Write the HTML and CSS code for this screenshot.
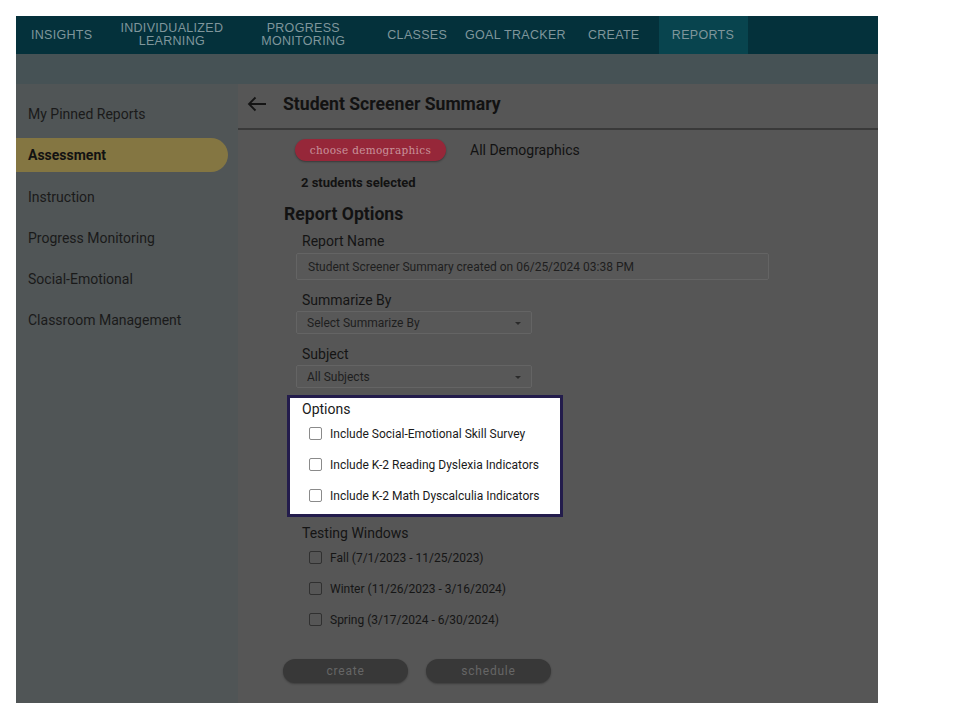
FILE: index.html
```html
<!DOCTYPE html>
<html>
<head>
<meta charset="utf-8">
<link rel="stylesheet" href="styles.css">
</head>
<body>
<div class="app">
  <nav class="topnav">
    <div class="tab t-insights">INSIGHTS</div>
    <div class="tab t-il">INDIVIDUALIZED<br>LEARNING</div>
    <div class="tab t-pm">PROGRESS<br>MONITORING</div>
    <div class="tab t-classes">CLASSES</div>
    <div class="tab t-goal">GOAL TRACKER</div>
    <div class="tab t-create">CREATE</div>
    <div class="tab active">REPORTS</div>
  </nav>
  <div class="subbar"></div>
  <div class="body">
    <aside class="sidebar">
      <div class="side-item">My Pinned Reports</div>
      <div class="side-item selected">Assessment</div>
      <div class="side-item">Instruction</div>
      <div class="side-item">Progress Monitoring</div>
      <div class="side-item">Social-Emotional</div>
      <div class="side-item">Classroom Management</div>
    </aside>
    <main class="main">
      <header class="page-head">
        <svg class="back" width="20" height="16" viewBox="0 0 20 16"><path d="M19 8H2M8.5 1.5L2 8l6.5 6.5" fill="none" stroke="#141414" stroke-width="1.8"/></svg>
        <h1 class="title">Student Screener Summary</h1>
      </header>
      <section class="content">
        <div class="demo-row">
          <span class="pill">choose demographics</span>
          <span class="demo-text">All Demographics</span>
        </div>
        <div class="selected-count">2 students selected</div>
        <h2 class="section-title">Report Options</h2>

        <div class="field-label">Report Name</div>
        <div class="input">Student Screener Summary created on 06/25/2024 03:38 PM</div>

        <div class="field-label gap">Summarize By</div>
        <div class="select"><span>Select Summarize By</span><span class="caret"></span></div>

        <div class="field-label gap">Subject</div>
        <div class="select"><span>All Subjects</span><span class="caret"></span></div>

        <div class="options-box">
          <div class="field-label inbox">Options</div>
          <div class="check-row"><span class="box light"></span>Include Social-Emotional Skill Survey</div>
          <div class="check-row"><span class="box light"></span>Include K-2 Reading Dyslexia Indicators</div>
          <div class="check-row"><span class="box light"></span>Include K-2 Math Dyscalculia Indicators</div>
        </div>

        <div class="field-label tw">Testing Windows</div>
        <div class="check-row dim"><span class="box"></span>Fall (7/1/2023 - 11/25/2023)</div>
        <div class="check-row dim"><span class="box"></span>Winter (11/26/2023 - 3/16/2024)</div>
        <div class="check-row dim"><span class="box"></span>Spring (3/17/2024 - 6/30/2024)</div>

        <div class="actions">
          <span class="btn">create</span>
          <span class="btn">schedule</span>
        </div>
      </section>
    </main>
  </div>
</div>
</body>
</html>
```
FILE: styles.css
```css
html, body {
  margin: 0;
  padding: 0;
  background: #ffffff;
}
body {
  font-family: Roboto, "Liberation Sans", sans-serif;
}
.app {
  margin: 16px 0 0 16px;
  width: 862px;
  height: 687px;
  display: flex;
  flex-direction: column;
  overflow: hidden;
  background: #565656;
}
.topnav {
  height: 38px;
  background: #04313b;
  display: flex;
  align-items: stretch;
  flex: none;
}
.tab {
  display: flex;
  align-items: center;
  justify-content: center;
  text-align: center;
  color: #7f969b;
  font-family: "Liberation Sans", Arial, sans-serif;
  font-size: 12.5px;
  line-height: 13px;
  letter-spacing: 0.3px;
}
.t-insights { padding-left: 15px; }
.t-il { margin-left: 28px; }
.t-pm { margin-left: 38px; }
.t-classes { margin-left: 42px; }
.t-goal { margin-left: 18px; }
.t-create { margin-left: 22px; }
.tab.active {
  background: #08444e;
  width: 89px;
  margin-left: 19px;
}
.subbar {
  height: 30px;
  background: #465255;
  flex: none;
}
.body {
  flex: 1;
  display: flex;
  min-height: 0;
}
.sidebar {
  width: 222px;
  flex: none;
  background: #505556;
  padding-top: 13px;
  display: flex;
  flex-direction: column;
  gap: 7.3px;
}
.side-item {
  height: 34px;
  width: 212px;
  box-sizing: border-box;
  display: flex;
  align-items: center;
  padding-left: 12px;
  font-size: 14px;
  color: #1a1a1a;
}
.side-item.selected {
  background: #847642;
  border-radius: 0 17px 17px 0;
  font-weight: 700;
  color: #121212;
}
.main {
  flex: 1;
  background: #565656;
}
.page-head {
  height: 39px;
  display: flex;
  align-items: center;
  border-bottom: 2px solid #393939;
  padding-left: 9px;
  padding-bottom: 5px;
}
.back {
  margin-right: 16px;
}
.title {
  margin: 0;
  font-size: 17.6px;
  font-weight: 700;
  color: #121212;
}
.content {
  padding-left: 45px;
  padding-top: 9px;
}
.demo-row {
  display: flex;
  align-items: center;
  margin-left: 12px;
  height: 22px;
}
.pill {
  width: 151px;
  height: 22px;
  border-radius: 11px;
  background: #962739;
  color: #c8929b;
  font-family: "DejaVu Serif", "Liberation Serif", serif;
  font-size: 10.5px;
  letter-spacing: 0.3px;
  display: flex;
  align-items: center;
  justify-content: center;
  box-shadow: 0 1px 2px rgba(0,0,0,0.35);
}
.demo-text {
  margin-left: 24px;
  font-size: 14px;
  color: #121212;
}
.selected-count {
  margin: 13px 0 0 18px;
  font-size: 13px;
  line-height: 18px;
  font-weight: 700;
  color: #121212;
}
.section-title {
  margin: 11px 0 0 1px;
  font-size: 17.6px;
  line-height: 22px;
  font-weight: 700;
  color: #121212;
}
.field-label {
  margin: 8px 0 0 19px;
  font-size: 14px;
  line-height: 17px;
  color: #141414;
}
.field-label.gap {
  margin-top: 12px;
}
.input {
  margin: 3px 0 0 13px;
  width: 473px;
  height: 27px;
  box-sizing: border-box;
  border: 1px solid #646464;
  border-radius: 2px;
  background: #585858;
  display: flex;
  align-items: center;
  padding-left: 11px;
  font-size: 12px;
  color: #1e1e1e;
}
.select {
  margin: 2px 0 0 13px;
  width: 236px;
  height: 23px;
  box-sizing: border-box;
  border: 1px solid #646464;
  border-radius: 2px;
  background: #585858;
  display: flex;
  align-items: center;
  justify-content: space-between;
  padding: 0 10px 0 10px;
  font-size: 12px;
  color: #1e1e1e;
}
.caret {
  width: 0;
  height: 0;
  border-left: 3.5px solid transparent;
  border-right: 3.5px solid transparent;
  border-top: 3.5px solid #2a2a2a;
  margin-top: 2px;
}
.options-box {
  margin: 7px 0 0 4px;
  width: 276px;
  height: 122px;
  box-sizing: border-box;
  border: 3px solid #231c4c;
  background: #ffffff;
  padding-top: 3px;
}
.field-label.inbox {
  margin: 0 0 0 12px;
  color: #1a1a1a;
}
.check-row {
  height: 31px;
  display: flex;
  align-items: center;
  margin-left: 26px;
  font-size: 12px;
  color: #1a1a1a;
}
.options-box .check-row {
  margin-left: 19px;
}
.box {
  width: 13px;
  height: 13px;
  box-sizing: border-box;
  border: 1.5px solid #303030;
  border-radius: 2px;
  margin-right: 8px;
  flex: none;
}
.box.light {
  border-color: #8a8a8a;
}
.check-row.dim {
  color: #151515;
}
.field-label.tw {
  margin-top: 8px;
}
.actions {
  margin-top: 24px;
  display: flex;
  gap: 18px;
}
.btn {
  width: 125px;
  height: 24px;
  border-radius: 12px;
  background: #383838;
  color: #666666;
  font-size: 12px;
  letter-spacing: 0.8px;
  display: flex;
  align-items: center;
  justify-content: center;
  box-shadow: 0 1px 2px rgba(0,0,0,0.3);
}
```
